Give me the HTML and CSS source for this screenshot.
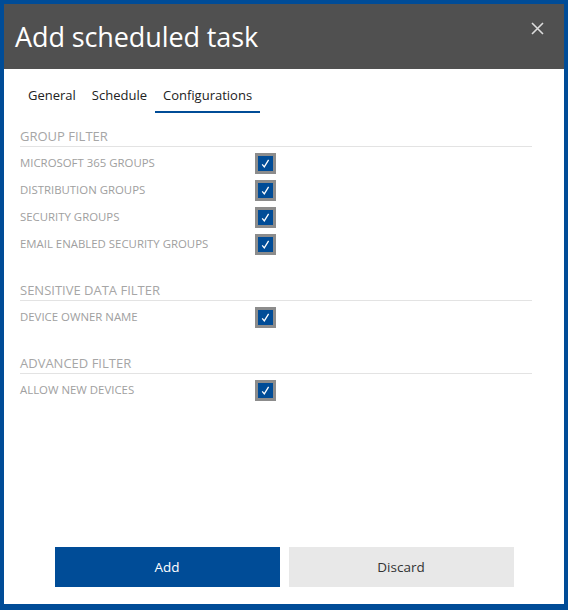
FILE: index.html
```html
<!DOCTYPE html>
<html>
<head>
<meta charset="utf-8">
<link rel="stylesheet" href="styles.css">
</head>
<body>
<div class="dialog">
  <div class="header">
    <h1 class="title">Add scheduled task</h1>
    <button class="close" aria-label="Close">
      <svg width="13" height="13" viewBox="0 0 13 13"><path d="M1 1 L12 12 M12 1 L1 12" stroke="#dcdcdc" stroke-width="1.6" fill="none"/></svg>
    </button>
  </div>
  <div class="tabs">
    <div class="tab">General</div>
    <div class="tab">Schedule</div>
    <div class="tab active">Configurations</div>
  </div>
  <div class="content">
    <section class="group">
      <div class="group-title">GROUP FILTER</div>
      <div class="rows">
        <div class="row"><span class="label">MICROSOFT 365 GROUPS</span><span class="check"><svg width="15" height="15" viewBox="0 0 15 15"><path d="M4.2 8.3 L6.3 10.8 L10.6 3.8" stroke="#fff" stroke-width="1.3" fill="none"/></svg></span></div>
        <div class="row"><span class="label">DISTRIBUTION GROUPS</span><span class="check"><svg width="15" height="15" viewBox="0 0 15 15"><path d="M4.2 8.3 L6.3 10.8 L10.6 3.8" stroke="#fff" stroke-width="1.3" fill="none"/></svg></span></div>
        <div class="row"><span class="label">SECURITY GROUPS</span><span class="check"><svg width="15" height="15" viewBox="0 0 15 15"><path d="M4.2 8.3 L6.3 10.8 L10.6 3.8" stroke="#fff" stroke-width="1.3" fill="none"/></svg></span></div>
        <div class="row"><span class="label">EMAIL ENABLED SECURITY GROUPS</span><span class="check"><svg width="15" height="15" viewBox="0 0 15 15"><path d="M4.2 8.3 L6.3 10.8 L10.6 3.8" stroke="#fff" stroke-width="1.3" fill="none"/></svg></span></div>
      </div>
    </section>
    <section class="group">
      <div class="group-title">SENSITIVE DATA FILTER</div>
      <div class="rows">
        <div class="row"><span class="label">DEVICE OWNER NAME</span><span class="check"><svg width="15" height="15" viewBox="0 0 15 15"><path d="M4.2 8.3 L6.3 10.8 L10.6 3.8" stroke="#fff" stroke-width="1.3" fill="none"/></svg></span></div>
      </div>
    </section>
    <section class="group">
      <div class="group-title">ADVANCED FILTER</div>
      <div class="rows">
        <div class="row"><span class="label">ALLOW NEW DEVICES</span><span class="check"><svg width="15" height="15" viewBox="0 0 15 15"><path d="M4.2 8.3 L6.3 10.8 L10.6 3.8" stroke="#fff" stroke-width="1.3" fill="none"/></svg></span></div>
      </div>
    </section>
  </div>
  <div class="footer">
    <button class="btn primary">Add</button>
    <button class="btn secondary">Discard</button>
  </div>
</div>
</body>
</html>
```

FILE: styles.css
```css
* { box-sizing: border-box; }
html, body { margin: 0; padding: 0; background: #fff; }
body { font-family: "Open Sans", "Noto Sans", sans-serif; }

.dialog {
  width: 568px;
  height: 610px;
  border: 4px solid #004c97;
  border-bottom-width: 6px;
  display: flex;
  flex-direction: column;
  background: #fff;
}

.header {
  height: 65px;
  background: #505050;
  display: flex;
  align-items: flex-start;
  justify-content: space-between;
}
.title {
  margin: 0;
  padding: 14px 0 0 11px;
  font-weight: normal;
  font-size: 27px;
  line-height: 38px;
  color: #fff;
  letter-spacing: -0.1px;
}
.close {
  border: 0;
  background: transparent;
  padding: 0;
  margin: 18px 20px 0 0;
  width: 13px;
  height: 13px;
  display: flex;
}

.tabs {
  display: flex;
  padding: 0 16px;
}
.tab {
  padding: 16px 8px 6px;
  font-size: 13px;
  line-height: 20px;
  color: #222;
  border-bottom: 2px solid transparent;
}
.tab.active { border-bottom-color: #004c97; }

.content {
  padding: 14px 32px 0 16px;
}
.group + .group { margin-top: 23px; }
.group-title {
  font-size: 13px;
  line-height: 18px;
  color: #a6a6a6;
  padding-bottom: 1px;
  border-bottom: 1px solid #e3e3e3;
}
.rows { padding-top: 3px; }
.row {
  height: 27px;
  display: grid;
  grid-template-columns: 235px 21px;
  align-items: center;
}
.label {
  font-size: 11.4px;
  color: #a0a0a0;
  margin-top: -2px;
}
.check {
  width: 21px;
  height: 21px;
  border: 3px solid #8c8c8c;
  background: #004c97;
  display: flex;
}

.footer {
  margin-top: auto;
  padding-bottom: 17px;
  display: flex;
  justify-content: center;
  gap: 9px;
}
.btn {
  width: 225px;
  height: 40px;
  border: 0;
  font-family: "Open Sans", "Noto Sans", sans-serif;
  font-size: 13.5px;
  padding: 0;
}
.btn.primary { background: #004c97; color: #fff; }
.btn.secondary { background: #e8e8e8; color: #333; }
```
